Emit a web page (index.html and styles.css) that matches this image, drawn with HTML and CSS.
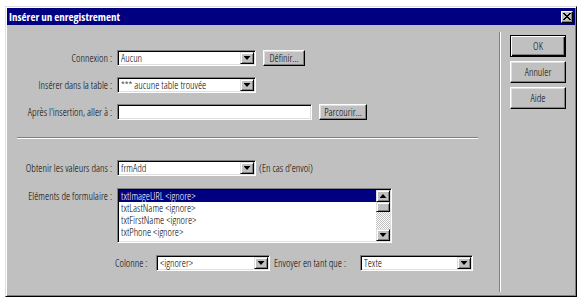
FILE: index.html
```html
<!DOCTYPE html>
<html lang="fr">
<head>
<meta charset="UTF-8">
<title>Insérer un enregistrement</title>
<link rel="stylesheet" href="styles.css">
</head>
<body>
<div class="window">
  <div class="titlebar">
    <span class="title">Insérer un enregistrement</span>
    <span class="close">
      <svg width="8" height="7" viewBox="0 0 8 7"><path fill="#000" d="M0 0h2v1H0zM6 0h2v1H6zM1 1h2v1H1zM5 1h2v1H5zM2 2h4v1H2zM3 3h2v1H3zM2 4h4v1H2zM1 5h2v1H1zM5 5h2v1H5zM0 6h2v1H0zM6 6h2v1H6z"/></svg>
    </span>
  </div>
  <div class="content">
    <div class="main">
      <div class="row r1">
        <div class="label">Connexion :</div>
        <div class="field combo w139"><span class="value">Aucun</span><span class="drop"></span></div>
        <div class="btn small definir">Définir...</div>
      </div>
      <div class="row r2">
        <div class="label">Insérer dans la table :</div>
        <div class="field combo w139"><span class="value">*** aucune table trouvée</span><span class="drop"></span></div>
      </div>
      <div class="row r3">
        <div class="label">Après l'insertion, aller à :</div>
        <div class="field w195"></div>
        <div class="btn small parcourir">Parcourir...</div>
      </div>
      <div class="sep"></div>
      <div class="row r4">
        <div class="label">Obtenir les valeurs dans :</div>
        <div class="field combo w139"><span class="value">frmAdd</span><span class="drop"></span></div>
        <span class="note">(En cas d'envoi)</span>
      </div>
      <div class="row r5">
        <div class="label">Eléments de formulaire :</div>
        <div class="field listbox">
          <div class="items">
            <div class="item sel">txtImageURL &lt;ignore&gt;</div>
            <div class="item">txtLastName &lt;ignore&gt;</div>
            <div class="item">txtFirstName &lt;ignore&gt;</div>
            <div class="item">txtPhone &lt;ignore&gt;</div>
          </div>
          <div class="scrollbar">
            <span class="sbtn up"></span>
            <span class="thumb"></span>
            <span class="track"></span>
            <span class="sbtn down"></span>
          </div>
        </div>
      </div>
      <div class="row r6">
        <div class="lbl-col">Colonne :</div>
        <div class="field combo w114"><span class="value">&lt;ignorer&gt;</span><span class="drop"></span></div>
        <div class="lbl-send">Envoyer en tant que :</div>
        <div class="field combo w113"><span class="value">Texte</span><span class="drop"></span></div>
      </div>
    </div>
    <div class="vsep"></div>
    <div class="side">
      <div class="btn big default">OK</div>
      <div class="btn big">Annuler</div>
      <div class="btn big">Aide</div>
    </div>
  </div>
</div>
</body>
</html>
```

FILE: styles.css
```css
* {
margin: 0;
padding: 0;
box-sizing: border-box;
}

body {
background: #fff;
color: #000;
font-family: "Open Sans", "Liberation Sans", Arial, sans-serif;
font-stretch: 75%;
font-weight: 360;
font-size: 10.5px;
}

.window {
margin: 6px 0 0 5px;
width: 572px;
height: 291px;
padding: 1px;
background: #c0c0c0;
border: 1px solid;
border-color: #dfdfdf #000 #000 #dfdfdf;
box-shadow: inset 1px 1px #fff, inset -1px -1px #808080;
}

.titlebar {
height: 17px;
padding: 0 2px;
background: #000080;
display: flex;
align-items: center;
justify-content: space-between;
}

.title {
color: #fff;
font-weight: 700;
font-size: 11px;
}

.close {
width: 12px;
height: 12px;
background: #c0c0c0;
border: 1px solid;
border-color: #fff #000 #000 #fff;
box-shadow: inset -1px -1px #808080;
display: flex;
align-items: center;
justify-content: center;
}

.close svg {
display: block;
shape-rendering: crispEdges;
}

.content {
display: flex;
height: 270px;
}

.main {
width: 492px;
padding: 25px 0 0 10px;
}

.vsep {
width: 2px;
margin: 7px 0 3px;
border-left: 1px solid #808080;
border-right: 1px solid #fff;
}

.side {
padding: 10px 0 0 9px;
display: flex;
flex-direction: column;
gap: 4px;
}

.row {
display: flex;
align-items: center;
}

.r2,
.r3 {
margin-top: 11px;
}

.r4 {
margin-top: 21px;
}

.r5 {
margin-top: 12px;
align-items: flex-start;
}

.r6 {
margin-top: 12px;
padding-left: 98px;
}

.label {
width: 100px;
padding-right: 5px;
text-align: right;
white-space: nowrap;
}

.r5 .label {
padding-top: 1px;
}

.sep {
width: 461px;
height: 2px;
margin-top: 17px;
border-top: 1px solid #808080;
border-bottom: 1px solid #fff;
}

.field {
height: 16px;
background: #fff;
border: 1px solid;
border-color: #808080 #fff #fff #808080;
box-shadow: inset 1px 1px #000, inset -1px -1px #dfdfdf;
}

.combo {
display: flex;
align-items: center;
padding: 0 1px 0 3px;
}

.combo .value {
flex: 1;
white-space: nowrap;
overflow: hidden;
}

.drop,
.sbtn {
width: 14px;
height: 12px;
background: #c0c0c0;
border: 1px solid;
border-color: #dfdfdf #000 #000 #dfdfdf;
box-shadow: inset 1px 1px #fff, inset -1px -1px #808080;
display: flex;
align-items: center;
justify-content: center;
}

.drop::after,
.sbtn::after {
content: "";
width: 7px;
height: 4px;
background: #000;
clip-path: polygon(0 0, 100% 0, 50% 100%);
}

.sbtn.up::after {
clip-path: polygon(50% 0, 100% 100%, 0 100%);
}

.w139 { width: 139px; }
.w195 { width: 195px; }
.w114 { width: 114px; }
.w113 { width: 113px; }

.btn {
background: #c0c0c0;
border: 1px solid;
border-color: #fff #000 #000 #fff;
box-shadow: inset -1px -1px #808080, inset 1px 1px #dfdfdf;
display: flex;
align-items: center;
justify-content: center;
white-space: nowrap;
}

.btn.small {
height: 16px;
margin-left: 7px;
}

.definir { width: 42px; }
.parcourir { width: 48px; }

.btn.big {
width: 56px;
height: 22px;
}

.btn.default {
border-color: #000;
box-shadow: inset 1px 1px #fff, inset -1px -1px #000, inset -2px -2px #808080;
}

.note {
margin-left: 3px;
}

.listbox {
width: 275px;
height: 55px;
display: flex;
padding: 1px;
}

.items {
flex: 1;
overflow: hidden;
}

.item {
height: 12px;
line-height: 12px;
padding-left: 2px;
white-space: nowrap;
overflow: hidden;
}

.item.sel {
background: #000080;
color: #fff;
}

.scrollbar {
width: 14px;
display: flex;
flex-direction: column;
}

.thumb {
height: 10px;
background: #c0c0c0;
border: 1px solid;
border-color: #dfdfdf #000 #000 #dfdfdf;
box-shadow: inset 1px 1px #fff, inset -1px -1px #808080;
}

.track {
flex: 1;
background: repeating-conic-gradient(#fff 0 25%, #c0c0c0 0 50%) 0 0 / 2px 2px;
}

.lbl-col {
width: 41px;
white-space: nowrap;
}

.lbl-send {
width: 86px;
margin-left: 4px;
white-space: nowrap;
}
```
